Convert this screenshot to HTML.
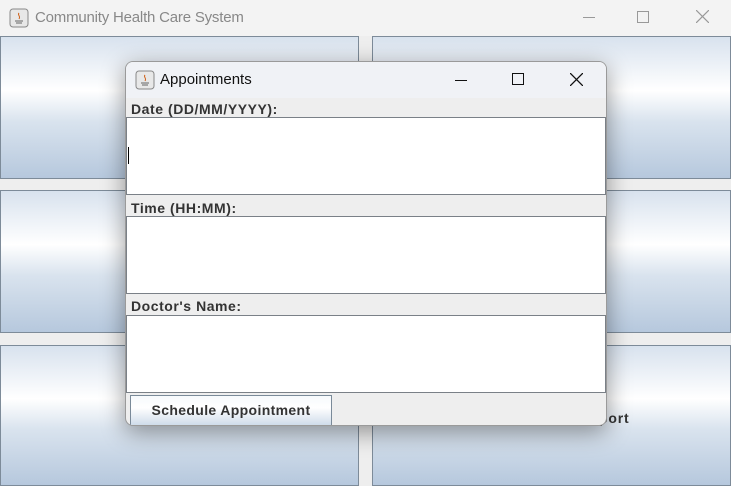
<html><head><style>
body{margin:0;width:731px;height:486px;overflow:hidden;background:#eeeeee;font-family:"Liberation Sans",sans-serif;position:relative}
.t{position:absolute;left:0;top:0;width:731px;height:36px;background:#f3f3f3}
.b{position:absolute;border:1px solid #7d8b99;background:linear-gradient(#d8e2ee 0%,#ffffff 38%,#d9e3ee 60%,#b6c8dd 100%);box-sizing:border-box}
.d{position:absolute;left:125px;top:61px;width:482px;height:365px;background:#eeeeee;border:1px solid #9a9a9a;border-radius:8px;box-sizing:border-box;box-shadow:0 6px 24px rgba(0,0,0,.4);overflow:hidden}
.l{position:absolute;left:5px;font-weight:bold;font-size:14px;color:#333;letter-spacing:0.55px}
.f{position:absolute;left:0;width:480px;background:#fff;border:1px solid #7a8087;box-sizing:border-box}
</style></head><body>
<div class="t"></div>
<svg style="position:absolute;left:9px;top:8px" width="20" height="20"><rect x="1" y="1" width="18" height="18" rx="3" fill="#e8e8e8" stroke="#888"/><path d="M6 13h8M7 15h6" stroke="#666"/><path d="M10 5c-2 2 2 3 0 6" stroke="#d0641e" fill="none"/></svg>
<div style="position:absolute;left:35px;top:9px;font-size:15px;color:#888;letter-spacing:-0.2px">Community Health Care System</div>
<div style="position:absolute;left:583px;top:17px;width:12px;height:1px;background:#999"></div>
<div style="position:absolute;left:637px;top:11px;width:10px;height:10px;border:1px solid #999"></div>
<svg style="position:absolute;left:696px;top:10px" width="13" height="13"><path d="M0 0L13 13M13 0L0 13" stroke="#999" stroke-width="1.2"/></svg>
<div class="b" style="left:0;top:36px;width:359px;height:143px"></div>
<div class="b" style="left:372px;top:36px;width:359px;height:143px"></div>
<div class="b" style="left:0;top:190px;width:359px;height:143px"></div>
<div class="b" style="left:372px;top:190px;width:359px;height:143px"></div>
<div class="b" style="left:0;top:345px;width:359px;height:141px"></div>
<div class="b" style="left:372px;top:345px;width:359px;height:141px"></div>
<div style="position:absolute;left:599px;top:410px;font-weight:bold;font-size:14px;color:#333;letter-spacing:0.8px">port</div>
<div class="d">
<div style="position:absolute;left:0;top:0;width:482px;height:36px;background:#f0f2f6"></div>
<svg style="position:absolute;left:9px;top:8px" width="20" height="20"><rect x="1" y="1" width="18" height="18" rx="3" fill="#e8e8e8" stroke="#888"/><path d="M6 13h8M7 15h6" stroke="#666"/><path d="M10 5c-2 2 2 3 0 6" stroke="#d0641e" fill="none"/></svg>
<div style="position:absolute;left:34px;top:9px;font-size:15px;color:#111">Appointments</div>
<div style="position:absolute;left:329px;top:18px;width:12px;height:1px;background:#111"></div>
<div style="position:absolute;left:386px;top:11px;width:10px;height:10px;border:1.5px solid #111"></div>
<svg style="position:absolute;left:444px;top:11px" width="13" height="13"><path d="M0 0L13 13M13 0L0 13" stroke="#111" stroke-width="1.3"/></svg>
<div class="l" style="top:39px">Date (DD/MM/YYYY):</div>
<div class="f" style="top:55px;height:78px"><div style="position:absolute;left:1px;top:29px;width:1px;height:17px;background:#000"></div></div>
<div class="l" style="top:138px">Time (HH:MM):</div>
<div class="f" style="top:154px;height:78px"></div>
<div class="l" style="top:236px">Doctor's Name:</div>
<div class="f" style="top:253px;height:78px"></div>
<div style="position:absolute;left:4px;top:333px;width:202px;height:31px;box-sizing:border-box;border:1px solid #7a8a99;background:linear-gradient(#f6f9fc,#fff 40%,#cfdcea);font-weight:bold;font-size:14px;color:#333;text-align:center;line-height:29px;letter-spacing:0.35px">Schedule Appointment</div>
</div>
</body></html>
